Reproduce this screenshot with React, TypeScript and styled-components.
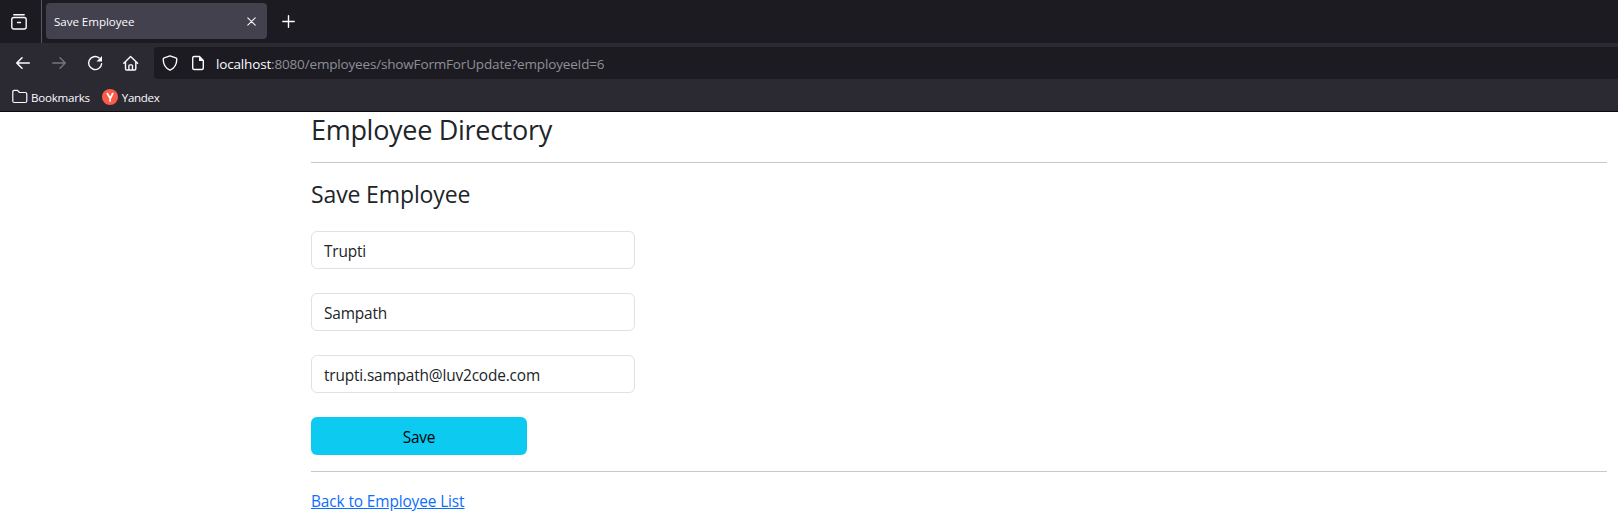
import React from 'react';
import styled, { createGlobalStyle } from 'styled-components';

const GlobalStyle = createGlobalStyle`
  *, *::before, *::after { box-sizing: border-box; }
  body {
    margin: 0;
    background: #fff;
    color: #212529;
    font-family: "Open Sans", "Noto Sans", sans-serif;
    font-size: 15.4px;
    line-height: 24px;
    overflow: hidden;
  }
`;

const TabStrip = styled.div`
  display: flex;
  height: 43px;
  background: #1c1b22;
  color: #fbfbfe;
`;

const ViewButton = styled.div`
  display: flex;
  align-items: center;
  width: 42px;
  padding-left: 11px;
  border-right: 1px solid #5a5962;
`;

const Tab = styled.div`
  display: flex;
  align-items: center;
  justify-content: space-between;
  width: 221px;
  height: 36px;
  margin: 3px 0 0 4px;
  padding: 1px 11px 0 8px;
  border-radius: 4px;
  background: #42414d;
  font-size: 11.6px;
`;

const NewTab = styled.div`
  display: flex;
  align-items: center;
  margin-left: 15px;
`;

const Toolbar = styled.div`
  display: flex;
  height: 40px;
  padding-top: 4px;
  background: #2b2a33;
  color: #fbfbfe;
`;

const NavButtons = styled.div`
  display: flex;
  align-items: center;
  gap: 20px;
  width: 154px;
  padding: 0 0 4px 15px;
`;

const AddressBar = styled.div`
  display: flex;
  align-items: center;
  flex: 1;
  height: 32px;
  padding-left: 8px;
  gap: 12px;
  border-radius: 4px 0 0 4px;
  background: #1c1b22;
`;

const Url = styled.div`
  color: #8f8f96;
  font-size: 13.5px;
  padding-top: 1px;
  margin-left: -2px;
`;

const Host = styled.span`
  color: #fbfbfe;
`;

const BookmarksBar = styled.div`
  display: flex;
  align-items: center;
  gap: 12px;
  height: 29px;
  border-bottom: 1px solid #0c0c0d;
  padding-left: 12px;
  background: #2b2a33;
  color: #fbfbfe;
  font-size: 11.6px;
`;

const Bookmark = styled.div<{ $gap?: number }>`
  display: flex;
  align-items: center;
  gap: ${({ $gap = 3 }) => $gap}px;

  > span {
    padding-top: 2px;
  }
`;

const Label = styled.span<{ $spacing?: number }>`
  letter-spacing: ${({ $spacing = 0 }) => $spacing}px;
  white-space: nowrap;
`;

const Content = styled.main`
  margin: 0 11px 0 311px;
`;

const Title = styled.h3`
  height: 33.6px;
  margin: 0 0 16px;
  padding-top: 1px;
  font-size: 27px;
  font-weight: 400;
  line-height: 33.6px;
`;

const Subtitle = styled.p`
  height: 28.8px;
  margin: 0 0 24px;
  padding-top: 1px;
  font-size: 23px;
  line-height: 28.8px;
`;

const Rule = styled.hr`
  height: 1px;
  margin: 16px 0;
  border: 0;
  background: #c7c8c9;
`;

const Field = styled.input`
  display: block;
  width: 25%;
  height: 38px;
  margin-bottom: 24px;
  padding: 2px 12px 0;
  border: 1px solid #dee2e6;
  border-radius: 6px;
  outline: 0;
  background: #fff;
  color: #212529;
  font: inherit;
  letter-spacing: -0.16px;
`;

const SaveButton = styled.button`
  display: block;
  width: 216px;
  height: 38px;
  padding: 4px 12px 0;
  border: 0;
  border-radius: 6px;
  background: #0dcaf0;
  color: #000;
  font: inherit;
`;

const BackLink = styled.a`
  display: inline-block;
  padding-top: 2px;
  color: #0d6efd;
  text-decoration: underline;
`;

const Icon = ({ size = 16, children, ...rest }: React.SVGProps<SVGSVGElement> & { size?: number }) => (
  <svg width={size} height={size} viewBox={`0 0 ${size} ${size}`} fill="none" stroke="currentColor"
    strokeWidth="1.4" strokeLinecap="round" strokeLinejoin="round" {...rest}>
    {children}
  </svg>
);

export default function App() {
  return (
    <>
      <GlobalStyle />
      <TabStrip>
        <ViewButton>
          <Icon>
            <path d="M2.8 .8h10.4" />
            <rect x="0.8" y="3.5" width="14.4" height="11.5" rx="2" />
            <path d="M6.5 8.5h3" />
          </Icon>
        </ViewButton>
        <Tab>
          <Label $spacing={-0.05}>Save Employee</Label>
          <Icon size={9} strokeWidth="1.1"><path d="M.8.8l7.4 7.4M8.2.8L.8 8.2" /></Icon>
        </Tab>
        <NewTab>
          <Icon size={13}><path d="M6.5.8v11.4M.8 6.5h11.4" /></Icon>
        </NewTab>
      </TabStrip>
      <Toolbar>
        <NavButtons>
          <Icon strokeWidth="1.6"><path d="M14.3 8H2M7 2.8L1.8 8 7 13.2" /></Icon>
          <Icon stroke="#76757d"><path d="M1.7 8H14M9 2.8L14.2 8 9 13.2" /></Icon>
          <Icon>
            <path d="M14.6 8.8A6.5 6.5 0 1 1 12.1 2.9" />
            <path d="M15 1v5.5H9.5z" fill="currentColor" stroke="none" />
          </Icon>
          <Icon>
            <path d="M.8 8.2L7.6 1.5l7 6.7M2.5 7v6.8q0 1.2 1.2 1.2h7.9q1.2 0 1.2-1.2V7M5.9 15v-4.2q0-.9.9-.9h1.8q.9 0 .9.9V15" />
          </Icon>
        </NavButtons>
        <AddressBar>
          <Icon><path d="M8 .8l5.8 2.1q1 .4 1 1.4c-.1 5.2-2.3 9-6.8 10.9C3.5 13.3 1.3 9.5 1.2 4.3q0-1 1-1.4z" /></Icon>
          <Icon>
            <path d="M9.5 1.5H4.2Q2.7 1.5 2.7 3v10q0 1.5 1.5 1.5h7.6q1.5 0 1.5-1.5V5.5z" />
            <path d="M9 1.2L13.8 6H9z" fill="currentColor" stroke="none" />
          </Icon>
          <Url><Label $spacing={-0.165}><Host>localhost</Host>:8080/employees/showFormForUpdate?employeeId=6</Label></Url>
        </AddressBar>
      </Toolbar>
      <BookmarksBar>
        <Bookmark>
          <Icon strokeWidth="1.2"><path d="M.8 12v-9Q.8 1.3 2.3 1.3h3.2L7.5 3.500h5.8q1.500 0 1.500 1.500v7q0 1.500-1.500 1.500H2.300Q.8 13.500 .8 12z" /></Icon>
          <Label $spacing={-0.25}>Bookmarks</Label>
        </Bookmark>
        <Bookmark $gap={4}>
          <Icon stroke="none">
            <circle cx="8" cy="8" r="8" fill="#fc5b4a" />
            <path d="M5 4l3.1 5.2V12.8M11 4L8.5 9" fill="none" stroke="#fff" strokeWidth="1.7" strokeLinecap="butt" />
          </Icon>
          <Label $spacing={-0.35}>Yandex</Label>
        </Bookmark>
      </BookmarksBar>
      <Content>
        <Title><Label $spacing={-0.3}>Employee Directory</Label></Title>
        <Rule />
        <Subtitle><Label $spacing={-0.13}>Save Employee</Label></Subtitle>
        <Field defaultValue="Trupti" />
        <Field defaultValue="Sampath" />
        <Field defaultValue="trupti.sampath@luv2code.com" />
        <SaveButton><Label $spacing={-0.15}>Save</Label></SaveButton>
        <Rule />
        <BackLink href="#"><Label $spacing={-0.11}>Back to Employee List</Label></BackLink>
      </Content>
    </>
  );
}
